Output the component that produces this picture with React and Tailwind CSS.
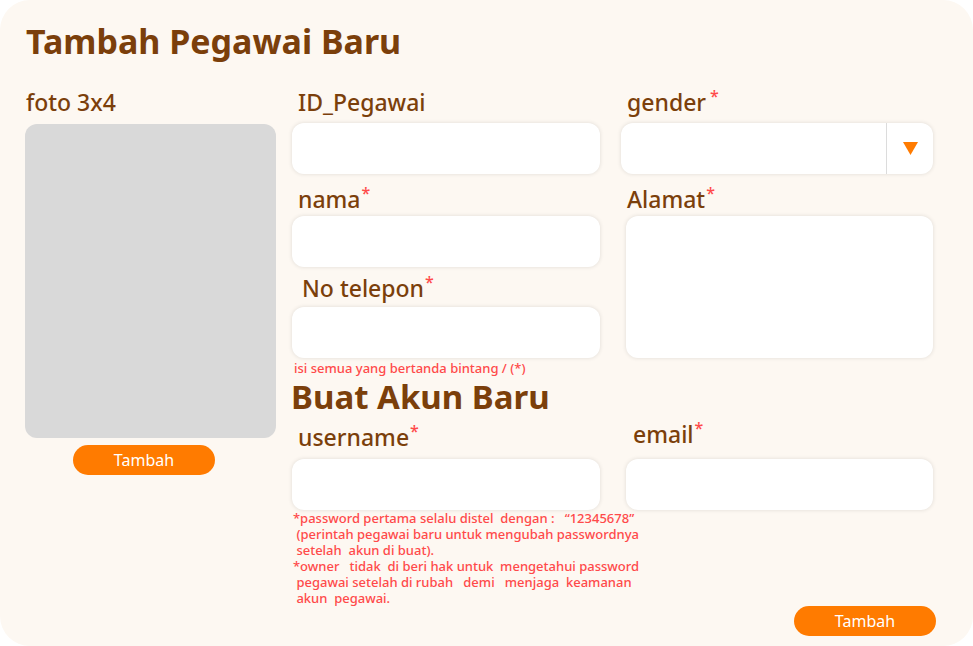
import { useState } from "react";

const font = { fontFamily: "'Noto Sans', Lato, sans-serif" };

function Star({ space }) {
  return (
    <span className={`relative -top-[9px] text-[16px] leading-none text-[#ff4a4a] ${space ? "ml-[4px]" : "ml-[1px]"}`}>*</span>
  );
}

function Label({ children, className = "" }) {
  return (
    <div className={`h-[24px] text-[23px] leading-[24px] font-medium text-[#7b3f0b] ${className}`}>
      {children}
    </div>
  );
}

function Input({ className = "" }) {
  return (
    <div className={`h-[51px] bg-white rounded-[12px] shadow-[0_0_4px_rgba(0,0,0,0.12)] ${className}`} />
  );
}

export default function App() {
  const [gender] = useState("");

  return (
    <div className="w-[973px] h-[646px] bg-white" style={font}>
      <div className="w-full h-full bg-[#fdf8f2] rounded-[30px] pt-[21px] pl-[26px]">
        <h1 className="h-[40px] text-[34px] leading-[40px] font-bold text-[#7b3f0b]">
          Tambah Pegawai Baru
        </h1>

        <div className="flex mt-[29px]">
          {/* FOTO */}
          <div className="w-[251px] -ml-[1px] flex flex-col">
            <Label className="pl-[1px]">foto 3x4</Label>
            <div className="mt-[10px] h-[314px] bg-[#d9d9d9] rounded-[12px]" />
            <button className="mt-[7px] ml-[48px] w-[142px] h-[30px] rounded-full bg-[#ff7b00] text-white text-[16px] leading-[30px]">
              Tambah
            </button>
          </div>

          {/* DATA PEGAWAI */}
          <div className="w-[308px] ml-[16px] flex flex-col">
            <Label className="pl-[6px] mb-[9px]">ID_Pegawai</Label>
            <Input />

            <Label className="pl-[6px] mt-[13px] mb-[5px]">
              nama<Star />
            </Label>
            <Input />

            <Label className="pl-[10px] mt-[9px] mb-[7px]">
              No telepon<Star />
            </Label>
            <Input />

            <p className="h-[16px] mt-[2px] pl-[2px] text-[13px] leading-[16px] font-medium text-[#ff4a4a]">
              isi semua yang bertanda bintang / (*)
            </p>

            <h2 className="h-[40px] mt-[1px] -ml-[1px] text-[33px] leading-[40px] font-bold text-[#7b3f0b]">
              Buat Akun Baru
            </h2>

            <Label className="pl-[6px] mt-[8px] mb-[10px]">
              username<Star />
            </Label>
            <Input />

            <div className="pl-[1px] text-[13px] leading-[16px] font-medium text-[#ff4a4a] whitespace-pre">
              <p>*password pertama selalu distel  dengan :   “12345678”</p>
              <p> (perintah pegawai baru untuk mengubah passwordnya</p>
              <p> setelah  akun di buat).</p>
              <p>*owner   tidak  di beri hak untuk  mengetahui password</p>
              <p> pegawai setelah di rubah   demi   menjaga  keamanan</p>
              <p> akun  pegawai.</p>
            </div>
          </div>

          {/* KANAN */}
          <div className="w-[312px] ml-[21px] flex flex-col">
            <Label className="pl-[6px] mb-[9px]">
              gender<Star space />
            </Label>
            <div className="h-[51px] bg-white rounded-[12px] shadow-[0_0_4px_rgba(0,0,0,0.12)] flex">
              <div className="flex-1">{gender}</div>
              <div className="w-[47px] border-l border-[#dcdcdc] flex items-center justify-center">
                <svg width="15" height="13" viewBox="0 0 15 13">
                  <polygon points="0,0 15,0 7.5,13" fill="#ff7b00" />
                </svg>
              </div>
            </div>

            <Label className="pl-[6px] mt-[13px] mb-[5px]">
              Alamat<Star />
            </Label>
            <div className="ml-[5px] h-[142px] bg-white rounded-[12px] shadow-[0_0_4px_rgba(0,0,0,0.12)]" />

            <Label className="pl-[12px] mt-[64px] mb-[13px]">
              email<Star />
            </Label>
            <Input className="ml-[5px]" />

            <button className="self-end -mr-[3px] mt-[96px] w-[142px] h-[30px] rounded-full bg-[#ff7b00] text-white text-[16px] leading-[30px]">
              Tambah
            </button>
          </div>
        </div>
      </div>
    </div>
  );
}
